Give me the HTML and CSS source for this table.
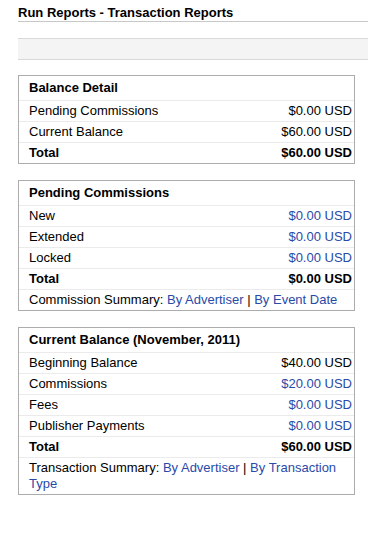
FILE: index.html
```html
<!DOCTYPE html>
<html>
<head>
<meta charset="utf-8">
<link rel="stylesheet" href="styles.css">
</head>
<body>
<div class="page">
  <h1 class="title">Run Reports - Transaction Reports</h1>
  <div class="toolbar"></div>

  <div class="box">
    <div class="row head">Balance Detail</div>
    <div class="row"><span>Pending Commissions</span><span>$0.00 USD</span></div>
    <div class="row"><span>Current Balance</span><span>$60.00 USD</span></div>
    <div class="row total"><span>Total</span><span>$60.00 USD</span></div>
  </div>

  <div class="box">
    <div class="row head">Pending Commissions</div>
    <div class="row"><span>New</span><a class="link">$0.00 USD</a></div>
    <div class="row"><span>Extended</span><a class="link">$0.00 USD</a></div>
    <div class="row"><span>Locked</span><a class="link">$0.00 USD</a></div>
    <div class="row total"><span>Total</span><span>$0.00 USD</span></div>
    <div class="row summary">Commission Summary: <a class="link">By Advertiser</a> | <a class="link">By Event Date</a></div>
  </div>

  <div class="box">
    <div class="row head">Current Balance (November, 2011)</div>
    <div class="row"><span>Beginning Balance</span><span>$40.00 USD</span></div>
    <div class="row"><span>Commissions</span><a class="link">$20.00 USD</a></div>
    <div class="row"><span>Fees</span><a class="link">$0.00 USD</a></div>
    <div class="row"><span>Publisher Payments</span><a class="link">$0.00 USD</a></div>
    <div class="row total"><span>Total</span><span>$60.00 USD</span></div>
    <div class="row summary">Transaction Summary: <a class="link">By Advertiser</a> | <a class="link">By Transaction Type</a></div>
  </div>
</div>
</body>
</html>
```

FILE: styles.css
```css
html, body {
  margin: 0;
  padding: 0;
  background: #ffffff;
}

body {
  font-family: "Liberation Sans", Arial, sans-serif;
  font-size: 13px;
  line-height: 16px;
  color: #000000;
}

.page {
  padding-left: 18px;
}

.title {
  margin: 0;
  padding: 5px 0 1px 0;
  font-size: 13px;
  line-height: 15px;
  font-weight: bold;
  color: #000000;
  border-bottom: 1px solid #c8c8c8;
}

.toolbar {
  margin-top: 16px;
  height: 20px;
  background: #f4f4f4;
  border-top: 1px solid #d9d9d9;
  border-bottom: 1px solid #d9d9d9;
}

.box {
  width: 335px;
  margin-top: 16px;
  border: 1px solid #acacac;
}

.toolbar + .box {
  margin-top: 15px;
}

.row {
  display: flex;
  justify-content: space-between;
  padding: 2px 2px 2px 10px;
  border-top: 1px solid #ebebeb;
}

.row.head {
  padding-top: 4px;
  padding-bottom: 4px;
  border-top: none;
  font-weight: bold;
}

.row.total {
  font-weight: bold;
}

.row.summary {
  display: block;
}

.link {
  color: #2a4aa8;
  text-decoration: none;
  cursor: pointer;
}
```
